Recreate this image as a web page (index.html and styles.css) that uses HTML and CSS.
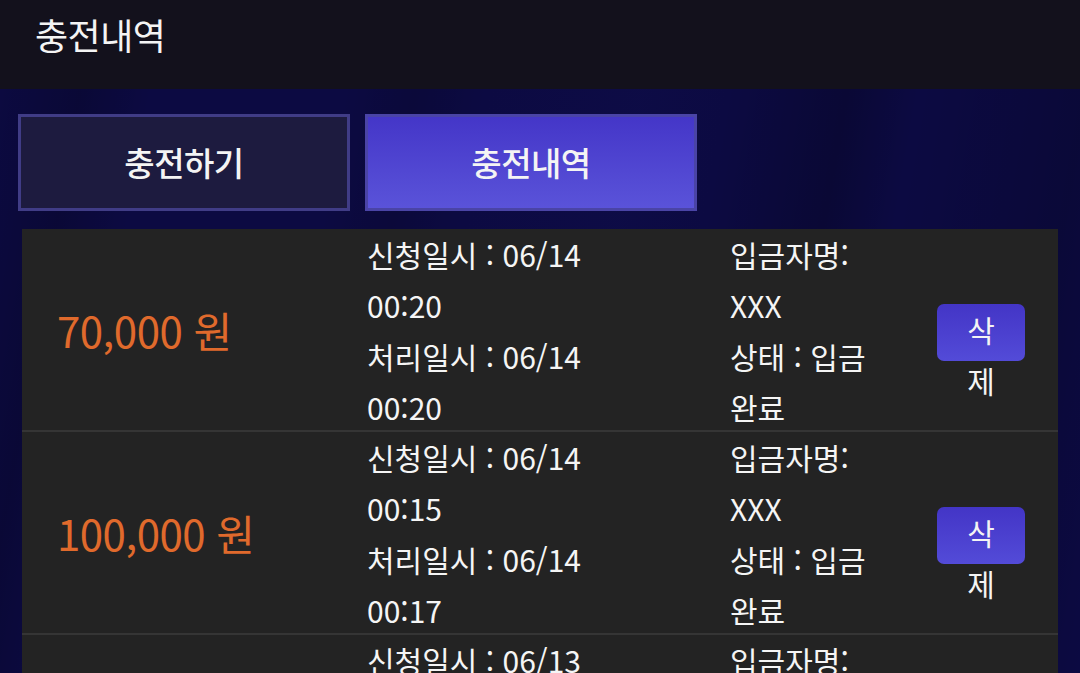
FILE: index.html
```html
<!DOCTYPE html>
<html lang="ko">
<head>
<meta charset="utf-8">
<title>충전내역</title>
<link rel="stylesheet" href="styles.css">
</head>
<body>
<header class="topbar">
  <h1 class="title">충전내역</h1>
</header>
<main class="content">
  <nav class="tabs">
    <div class="tab">충전하기</div>
    <div class="tab tab-active">충전내역</div>
  </nav>
  <section class="list">
    <div class="row">
      <div class="cell amount">70,000 원</div>
      <div class="cell dates"><p class="txt">신청일시 : 06/14 00:20</p><p class="txt">처리일시 : 06/14 00:20</p></div>
      <div class="cell info"><p class="txt">입금자명: XXX</p><p class="txt">상태 : 입금 완료</p></div>
      <div class="cell action"><div class="del" role="button">삭제</div></div>
    </div>
    <div class="row">
      <div class="cell amount">100,000 원</div>
      <div class="cell dates"><p class="txt">신청일시 : 06/14 00:15</p><p class="txt">처리일시 : 06/14 00:17</p></div>
      <div class="cell info"><p class="txt">입금자명: XXX</p><p class="txt">상태 : 입금 완료</p></div>
      <div class="cell action"><div class="del" role="button">삭제</div></div>
    </div>
    <div class="row">
      <div class="cell amount">50,000 원</div>
      <div class="cell dates"><p class="txt">신청일시 : 06/13 23:40</p><p class="txt">처리일시 : 06/13 23:42</p></div>
      <div class="cell info"><p class="txt">입금자명: XXX</p><p class="txt">상태 : 입금 완료</p></div>
      <div class="cell action"><div class="del" role="button">삭제</div></div>
    </div>
  </section>
</main>
</body>
</html>
```
FILE: styles.css
```css
* { box-sizing: border-box; }
html, body { margin: 0; padding: 0; }
body {
  width: 1080px;
  height: 673px;
  overflow: hidden;
  font-family: "Noto Sans CJK KR", "Noto Sans", sans-serif;
  color: #f5f5f5;
  background-color: #0c0a42;
  background-image:
    linear-gradient(100deg, rgba(0,0,0,0) 0%, rgba(0,0,0,0.18) 8%, rgba(0,0,0,0) 14%, rgba(0,0,0,0) 30%, rgba(0,0,0,0.12) 36%, rgba(0,0,0,0) 42%, rgba(20,20,90,0.15) 55%, rgba(0,0,0,0) 62%, rgba(0,0,0,0.2) 72%, rgba(0,0,0,0) 78%, rgba(0,0,0,0.15) 92%, rgba(0,0,0,0) 100%);
}
.topbar {
  height: 89px;
  background: #13111c;
  padding-left: 35px;
}
.title {
  margin: 0;
  font-size: 36px;
  font-weight: 400;
  line-height: 68px;
  color: #f4f4f4;
  letter-spacing: -0.5px;
}
.content {
  padding-top: 25px;
}
.tabs {
  display: flex;
  gap: 15px;
  padding-left: 18px;
}
.tab {
  width: 332px;
  height: 97px;
  border: 3px solid #403c86;
  background: #1d1b3f;
  display: flex;
  align-items: center;
  justify-content: center;
  padding-bottom: 2px;
  font-size: 33px;
  font-weight: 500;
  color: #f4f4f4;
  letter-spacing: -0.5px;
}
.tab-active {
  border-color: #4a44a6;
  background: linear-gradient(180deg, #4436c8 0%, #5a53d9 100%);
}
.list {
  margin: 18px 0 0 22px;
  width: 1036px;
  background: #232323;
}
.row {
  display: grid;
  grid-template-columns: 345px 363px 207px 121px;
  height: 203px;
  border-bottom: 2px solid #353535;
  font-size: 30px;
  line-height: 51px;
}
.cell {
  display: flex;
  flex-direction: column;
  justify-content: center;
  padding-bottom: 4px;
}
.txt {
  margin: 0;
}
.amount {
  padding-left: 35px;
  padding-bottom: 8px;
  font-size: 42px;
  color: #e06a2c;
  letter-spacing: -0.5px;
}
.dates .txt { max-width: 250px; }
.info .txt { max-width: 160px; }
.action {
  align-items: flex-start;
  padding-bottom: 2px;
}
.del {
  width: 88px;
  height: 57px;
  padding: 0 22px;
  border-radius: 7px;
  background: linear-gradient(180deg, #4335c6 0%, #534bd8 100%);
  color: #f4f4f4;
  font-size: 30px;
  line-height: 51px;
  text-align: center;
  overflow: visible;
  cursor: pointer;
}
```
